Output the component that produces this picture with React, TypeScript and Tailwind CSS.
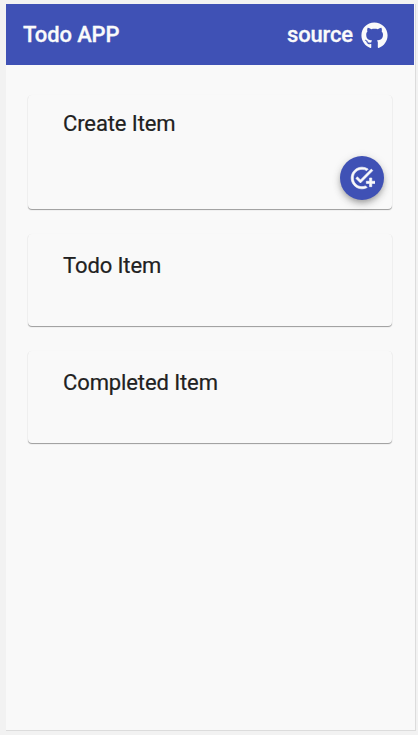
import { FaGithub } from "react-icons/fa";

const shadow =
  "shadow-[0_1px_1px_rgba(0,0,0,0.38),0_0_1px_rgba(0,0,0,0.05)]";

function AddTaskIcon() {
  return (
    <svg viewBox="0 0 24 24" className="size-[26px]" fill="currentColor" stroke="currentColor" strokeWidth="0.6">
      <path d="M22 5.18 10.59 16.6l-4.24-4.24 1.41-1.41 2.83 2.83 10-10L22 5.18zM12 20c-4.42 0-8-3.58-8-8s3.58-8 8-8c1.57 0 3.04.46 4.28 1.25l1.45-1.45A10.02 10.02 0 0 0 12 2C6.48 2 2 6.48 2 12s4.48 10 10 10c1.73 0 3.36-.44 4.78-1.22l-1.5-1.5c-1 .46-2.11.72-3.28.72zm7-5h-3v2h3v3h2v-3h3v-2h-3v-3h-2v3z" />
    </svg>
  );
}

function Card({ title, size, children }: { title: string; size: string; children?: React.ReactNode }) {
  return (
    <section className={`relative rounded bg-[#f9f9f9] px-[35px] ${size} ${shadow}`}>
      <h2 className="whitespace-nowrap text-[22px] font-normal leading-7 tracking-[-0.11px] text-[#212121] [-webkit-text-stroke:0.2px_#212121]">
        {title}
      </h2>
      {children}
    </section>
  );
}

export default function App() {
  return (
    <div className="h-[735px] w-[418px] bg-[#f2f2f2] pl-[6px] pt-1 font-['Roboto',sans-serif]">
      <div className="flex h-[727px] w-[410px] flex-col border-b border-r border-[#dcdcdc] bg-[#f9f9f9]">
        <header className="mr-px flex h-[61px] shrink-0 items-center justify-between bg-[#3f51b5] pl-[17px] pr-[26px] text-[#fafafa]">
          <h1 className="text-[22px] font-medium tracking-[-0.12px] [-webkit-text-stroke:0.3px_#fafafa]">Todo APP</h1>
          <a className="flex items-center gap-2 text-[22px] font-medium tracking-[-0.15px] [-webkit-text-stroke:0.3px_#fafafa]">
            source
            <FaGithub size={27} className="relative top-px" />
          </a>
        </header>
        <main className="flex flex-col gap-[25px] pl-[22px] pr-[23px] pt-[30px]">
          <Card title="Create Item" size="h-[114px] pt-[15px]">
            <button
              aria-label="Add item"
              className="absolute bottom-[9px] right-2 flex size-11 items-center justify-center rounded-full bg-[#3f51b5] text-[#fafafa] shadow-[0_3px_5px_-1px_rgba(0,0,0,0.2),0_5px_8px_rgba(0,0,0,0.14),0_1px_10px_rgba(0,0,0,0.1)]"
            >
              <AddTaskIcon />
            </button>
          </Card>
          <Card title="Todo Item" size="h-[92px] pt-[18px]" />
          <Card title="Completed Item" size="h-[92px] pt-[18px]" />
        </main>
      </div>
    </div>
  );
}
